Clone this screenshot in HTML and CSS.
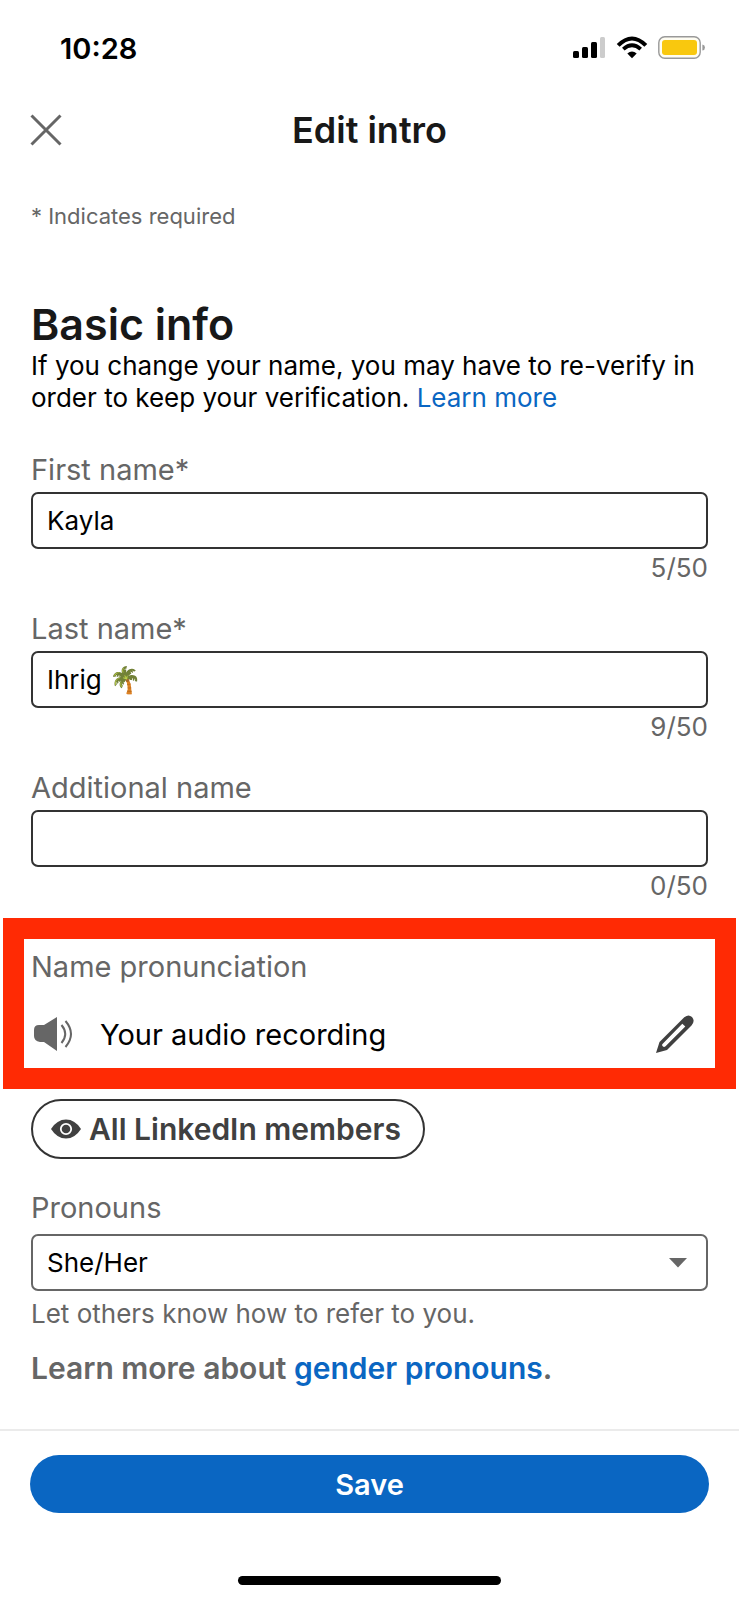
FILE: index.html
```html
<!DOCTYPE html>
<html lang="en">
<head>
<meta charset="utf-8">
<meta name="viewport" content="width=device-width, initial-scale=1">
<title>Edit intro</title>
<link rel="stylesheet" href="styles.css">
</head>
<body>
<div class="screen">
  <div class="status-bar">
    <span class="time">10:28</span>
    <div class="status-icons">
      <svg width="33" height="24" viewBox="0 0 33 24" aria-hidden="true">
        <rect x="0" y="15" width="6" height="7" rx="1.5"/>
        <rect x="9" y="11" width="6" height="11" rx="1.5"/>
        <rect x="18" y="6" width="6" height="16" rx="1.5"/>
        <rect x="27" y="1" width="5" height="21" rx="1.5" fill="#ccc"/>
      </svg>
      <svg width="32" height="24" viewBox="0 0 32 24" aria-hidden="true">
        <path d="M2.2 8.6Q16-5.4 29.8 8.6" transform="translate(0 .8)" fill="none" stroke="#000" stroke-width="4"/>
        <path d="M7.3 13.2Q16 5.4 24.7 13.2" fill="none" stroke="#000" stroke-width="3.8"/>
        <path d="M11.3 17.6Q16 13.6 20.7 17.6L16 22.3Z"/>
      </svg>
      <svg width="48" height="24" viewBox="0 0 48 24" aria-hidden="true">
        <rect x=".8" y=".8" width="41.4" height="21.4" rx="6" fill="#fffdf2" stroke="#999" stroke-width="1.4"/>
        <rect x="4" y="4" width="35" height="15" rx="3" fill="#f9c80e"/>
        <path d="M44.4 8.4Q47 9 47 11.5T44.4 14.6Z" fill="#999"/>
      </svg>
    </div>
  </div>

  <header class="title-bar">
    <button class="close" type="button" aria-label="Close">
      <svg width="32" height="32" viewBox="0 0 32 32" aria-hidden="true"><path d="M1.5 1.5l29 29M30.5 1.5l-29 29" stroke="#666" stroke-width="3"/></svg>
    </button>
    <h1>Edit intro</h1>
  </header>

  <form class="form">
    <p class="required">* Indicates required</p>
    <h2>Basic info</h2>
    <p class="intro">If you change your name, you may have to re-verify in order to keep your verification. <a href="#verify">Learn more</a></p>

    <div class="field">
      <label for="first">First name*</label>
      <input id="first" type="text" value="Kayla">
      <span class="count">5/50</span>
    </div>
    <div class="field">
      <label for="last">Last name*</label>
      <input id="last" type="text" value="Ihrig 🌴">
      <span class="count">9/50</span>
    </div>
    <div class="field">
      <label for="additional">Additional name</label>
      <input id="additional" type="text">
      <span class="count">0/50</span>
    </div>

    <section class="pronunciation">
      <h3>Name pronunciation</h3>
      <div class="recording">
        <svg width="40" height="36" viewBox="0 0 40 36" aria-hidden="true">
          <path d="M0 14Q0 9 5 9H10L23 1V35L10 26H6Q0 25 0 20Z" fill="#666"/>
          <path d="M27.500 9Q35 18 27.500 27M31.500 5Q42.500 18 31.500 31" fill="none" stroke="#666" stroke-width="2"/>
        </svg>
        <span>Your audio recording</span>
        <button class="edit" type="button" aria-label="Edit recording">
          <svg width="40" height="40" viewBox="0 0 40 40" aria-hidden="true">
            <path fill="#404040" fill-rule="evenodd" d="M1 39L4.500 28L28.500 4Q33-.5 37 3Q40.500 7 36.500 11.500L12 36ZM7.500 30Q6.500 31 8 32.500Q9 33.500 10.500 32.300L30.300 12.500L27.300 9.700Z"/>
          </svg>
        </button>
      </div>
    </section>

    <button class="audience" type="button">
      <svg width="30" height="20" viewBox="0 0 30 20" aria-hidden="true">
        <path d="M0 10Q6 .5 15 .5T30 10Q24 19.500 15 19.500T0 10Z" fill="#404040"/>
        <circle cx="15" cy="10" r="5.200" fill="none" stroke="#fff" stroke-width="1.8"/>
      </svg>
      All LinkedIn members
    </button>

    <div class="field pronouns">
      <label for="pronouns">Pronouns</label>
      <div class="select-box">
        <select id="pronouns"><option>She/Her</option></select>
        <svg class="caret" width="18" height="10" viewBox="0 0 18 10" aria-hidden="true"><path d="M0 0H18L9 9.500Z" fill="#666"/></svg>
      </div>
      <p class="helper">Let others know how to refer to you.</p>
    </div>
    <p class="more">Learn more about <a href="#pronouns-help">gender pronouns</a>.</p>
  </form>

  <footer class="footer">
    <button class="save" type="button">Save</button>
    <div class="home-bar"></div>
  </footer>
</div>
</body>
</html>
```

FILE: styles.css
```css
* { box-sizing: border-box; }

body {
  margin: 0;
  background: #fff;
  color: #000;
  font-family: Inter, "Liberation Sans", sans-serif;
  font-size: 26px;
}

h1, h2, h3, p { margin: 0; }

button, input, select { font: inherit; color: inherit; }

button {
  border: 0;
  padding: 0;
  background: none;
  cursor: pointer;
}

svg { display: block; flex: none; }

a { color: #0a66c2; text-decoration: none; }

.screen {
  display: flex;
  flex-direction: column;
  min-height: 100vh;
}

.status-bar {
  display: flex;
  align-items: center;
  justify-content: space-between;
  height: 96px;
  padding: 0 33px 0 60px;
}

.time { font-size: 29px; font-weight: 600; }

.status-icons { display: flex; gap: 10px; }

.title-bar {
  display: grid;
  grid-template-columns: 1fr auto 1fr;
  align-items: center;
  height: 68px;
  padding: 0 30px;
}

.title-bar h1 {
  color: #181818;
  font-size: 36px;
  font-weight: 600;
  line-height: 40px;
}

.close { justify-self: start; }

.form { padding: 36px 31px 36px; }

.required {
  color: #666;
  font-size: 22px;
  line-height: 32px;
}

.form h2 {
  margin-top: 66px;
  color: #181818;
  font-size: 43px;
  font-weight: 600;
  line-height: 52px;
}

.intro { line-height: 32px; margin-bottom: 36px; }

.field {
  display: flex;
  flex-direction: column;
}

.field + .field { margin-top: 25px; }

.field label, .pronunciation h3 {
  color: #666;
  font-size: 29px;
  font-weight: 400;
  line-height: 40px;
}

.field input, .field select {
  width: 100%;
  height: 57px;
  border: 2px solid #333;
  border-radius: 7px;
  background: #fff;
  padding: 0 14px;
}

.field input { margin-top: 2px; }

.count {
  align-self: flex-end;
  margin-top: 3px;
  color: #666;
  line-height: 32px;
}

.pronunciation {
  margin: 16px -28px 10px;
  border: 21px solid #ff2a04;
  padding: 8px 20px 6px 7px;
}

.recording {
  display: flex;
  align-items: center;
  height: 75px;
  padding: 19px 0 0 3px;
  font-size: 29px;
  gap: 26px;
}

.edit { margin-left: auto; }

.audience {
  display: flex;
  align-items: center;
  gap: 8px;
  height: 60px;
  border: 2px solid #333;
  border-radius: 30px;
  padding: 0 22px 0 18px;
  color: #404040;
  font-size: 30px;
  font-weight: 600;
}

.field.pronouns { margin-top: 29px; }

.select-box {
  position: relative;
  margin-top: 6px;
}

.field select {
  display: block;
  appearance: none;
  border-color: #666;
}

.caret {
  position: absolute;
  right: 21px;
  top: 24px;
  pointer-events: none;
}

.helper {
  margin-top: 7px;
  color: #666;
  line-height: 32px;
}

.more {
  margin-top: 18px;
  color: #666;
  font-size: 30px;
  font-weight: 600;
  line-height: 40px;
}

.footer {
  margin-top: auto;
  border-top: 2px solid #ebebeb;
  padding: 24px 30px 15px;
}

.save {
  display: block;
  width: 100%;
  height: 58px;
  border-radius: 29px;
  background: #0a66c2;
  color: #fff;
  font-size: 29px;
  font-weight: 600;
}

.home-bar {
  width: 263px;
  height: 9px;
  margin: 63px auto 0;
  border-radius: 5px;
  background: #000;
}
```
